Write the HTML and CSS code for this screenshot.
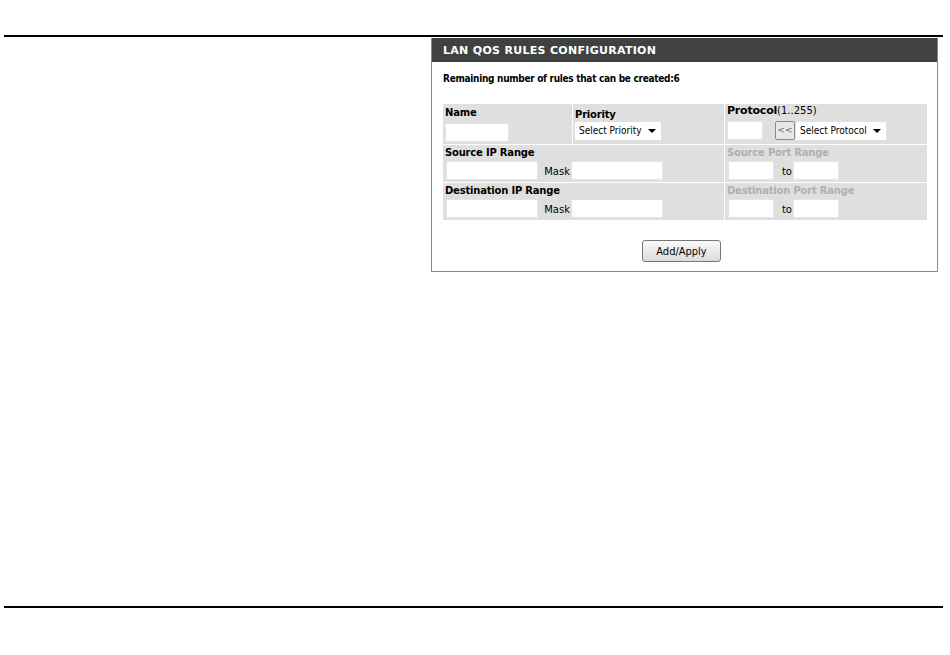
FILE: index.html
```html
<!DOCTYPE html>
<html>
<head>
    <title>LAN QoS</title>
    <link rel="stylesheet" href="styles.css">
</head>
<body>
    <div class="topline"></div>
    <div class="page">
        <div class="box">
            <div class="hedder">LAN QOS RULES CONFIGURATION</div>
            <div class="remain">Remaining number of rules that can be created:6</div>
            <table class="rules" cellspacing="1">
                <tr class="r1">
                    <td class="c1"><b>Name</b><br><input type="text" class="t-name"></td>
                    <td class="c2"><b>Priority</b><br>
                        <div class="sel sel-pri">Select Priority<span class="arr"></span></div>
                    </td>
                    <td class="c3"><b>Protocol</b>(1..255)<br>
                        <input type="text" class="t-proto"><span class="btn-ll">&lt;&lt;</span><div class="sel sel-proto">Select Protocol<span class="arr"></span></div>
                    </td>
                </tr>
                <tr class="r2">
                    <td colspan="2"><b>Source IP Range</b><br>
                        <input type="text" class="t-ip"><span class="mask">Mask</span><input type="text" class="t-ip"></td>
                    <td><b class="dim">Source Port Range</b><br>
                        <input type="text" class="t-port"><span class="to">to</span><input type="text" class="t-port"></td>
                </tr>
                <tr class="r2">
                    <td colspan="2"><b>Destination IP Range</b><br>
                        <input type="text" class="t-ip"><span class="mask">Mask</span><input type="text" class="t-ip"></td>
                    <td><b class="dim">Destination Port Range</b><br>
                        <input type="text" class="t-port"><span class="to">to</span><input type="text" class="t-port"></td>
                </tr>
            </table>
            <div class="foot">
                <button type="button" class="apply">Add/Apply</button>
            </div>
        </div>
    </div>
    <div class="botline"></div>
</body>
</html>
```
FILE: styles.css
```css
body {
    margin: 0;
    background: white;
    font-family: "DejaVu Sans", Verdana, sans-serif;
    font-size: 11px;
    color: black;
}
.topline {
    margin: 35px 7px 0 4px;
    height: 2px;
    background: black;
}
.botline {
    margin: 0 7px 0 4px;
    height: 2px;
    background: black;
}
.page {
    height: 568px;
    padding-left: 431px;
}
.box {
    width: 507px;
    height: 234px;
    border: 1px solid #8a8a8a;
    border-top: none;
    margin-top: 1px;
    box-sizing: border-box;
}
.hedder {
    background-color: #404242;
    color: white;
    height: 24px;
    line-height: 25px;
    font-weight: bold;
    font-size: 11px;
    letter-spacing: 0.3px;
    padding-left: 11px;
}
.remain {
    font-family: "DejaVu Sans Condensed", sans-serif;
    font-weight: bold;
    font-size: 10px;
    letter-spacing: -0.3px;
    padding: 11px 0 0 11px;
    height: 32px;
    box-sizing: border-box;
}
.rules {
    margin: 9px 0 0 10px;
    width: 486px;
    border-collapse: separate;
    border-spacing: 1px;
    background: white;
}
.rules td {
    background: #dfdfdf;
    padding: 0 2px;
    vertical-align: top;
    font-size: 10px;
    line-height: 13px;
}
.rules b {
    font-size: 10px;
    letter-spacing: -0.2px;
}
.rules td.c1 { width: 125px; }
.rules td.c2 { width: 147px; }
.r1 td { height: 38px; padding-top: 2px; }
.r1 td.c2 { padding-top: 4px; height: 36px; }
.r1 td.c3 { padding-top: 0; height: 40px; }
.r1 td.c3 b { font-size: 11px; }
.r2 td { height: 36px; padding-top: 1px; }
.dim {
    color: #b0b0b0;
}
input {
    border: 1px solid #e4e4e4;
    background: white;
    height: 19px;
    padding: 0;
    margin: 2px 0 0 0;
    vertical-align: top;
    box-sizing: border-box;
}
.t-name { width: 64px; margin-top: 4px; }
.t-proto { width: 36px; margin-top: 4px; }
.t-ip { width: 92px; margin-left: 1px; }
.t-port { width: 46px; margin-left: 1px; }
.mask {
    display: inline-block;
    width: 32px;
    text-align: right;
    margin-top: 6px;
    font-size: 10px;
}
.to {
    display: inline-block;
    width: 18px;
    text-align: right;
    margin-top: 6px;
    font-size: 10px;
}
.sel {
    display: inline-block;
    background: white;
    height: 18px;
    line-height: 18px;
    padding-left: 4px;
    position: relative;
    box-sizing: border-box;
    vertical-align: top;
    font-family: "DejaVu Sans Condensed", sans-serif;
    font-size: 10px;
}
.sel-pri { width: 86px; margin-top: 1px; }
.sel-proto { width: 90px; margin-top: 5px; margin-left: 1px; }
.arr {
    position: absolute;
    right: 5px;
    top: 7px;
    border-left: 4px solid transparent;
    border-right: 4px solid transparent;
    border-top: 4px solid black;
}
.btn-ll {
    display: inline-block;
    width: 20px;
    height: 19px;
    margin: 4px 0 0 12px;
    border: 1px solid #8a8a8a;
    border-radius: 2px;
    background: #e8e8e8;
    color: #666;
    font-size: 9px;
    line-height: 16px;
    text-align: center;
    box-sizing: border-box;
    vertical-align: top;
}
.foot {
    padding: 19px 0 0 210px;
}
.apply {
    width: 79px;
    height: 22px;
    border: 1px solid #777;
    border-radius: 3px;
    background: linear-gradient(to bottom, #fafafa, #dcdcdc);
    font-family: "DejaVu Sans Condensed", sans-serif;
    font-size: 11px;
    padding: 0;
}
```
